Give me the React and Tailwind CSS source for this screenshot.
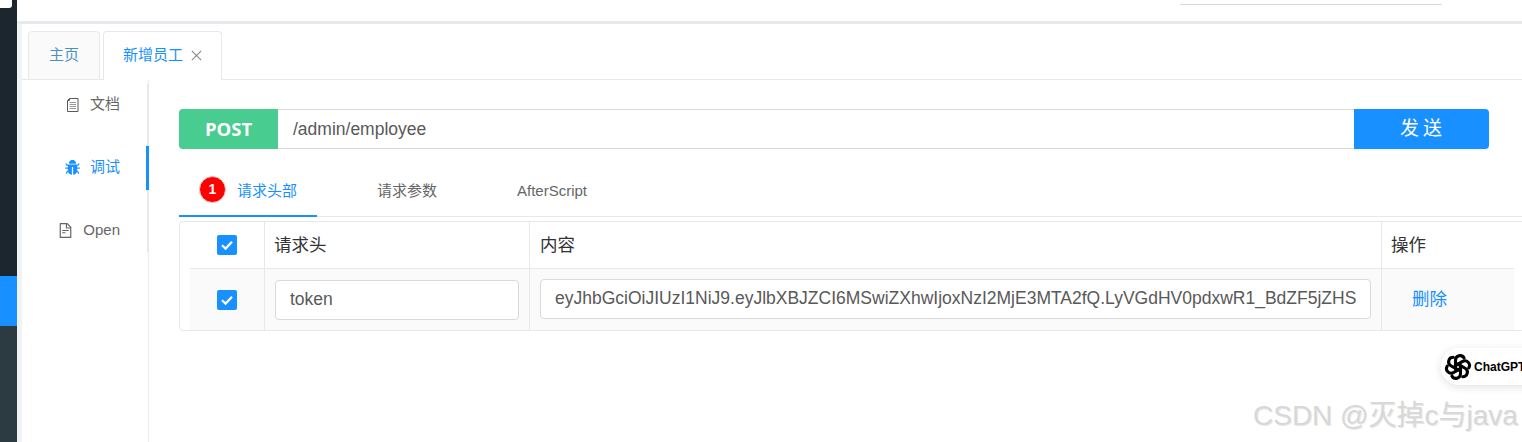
import React from "react";
import { AiFillBug, AiOutlineFileText, AiOutlineClose } from "react-icons/ai";

const FONT = "font-['Liberation_Sans','Noto_Sans_CJK_SC',sans-serif]";

function Check() {
  return (
    <span className="flex h-5 w-5 items-center justify-center rounded-[2px] bg-[#1890ff]">
      <svg viewBox="0 0 20 20" className="h-5 w-5" fill="none" stroke="#fff" strokeWidth="2.2">
        <path d="M5 10.2 L8.6 13.6 L15 6.8" />
      </svg>
    </span>
  );
}

function DocIcon() {
  return (
    <svg viewBox="0 0 14 16" className="h-4 w-[14px]" fill="none" stroke="#595959" strokeWidth="1">
      <path d="M3.5 1.5H12V14.5H1.5V3.5Z" />
      <path d="M3.5 1.5V3.5H1.5" />
      <path d="M3.5 5.5H10M3.5 7.5H10M3.5 9.5H10M3.5 11.5H10" stroke="#999" />
    </svg>
  );
}

function KnotLogo() {
  const angles = [0, 60, 120, 180, 240, 300];
  return (
    <svg viewBox="0 0 28 28" className="h-7 w-7 shrink-0" fill="none" stroke="#000" strokeWidth="3.1" strokeLinecap="round">
      {angles.map((a) => (
        <path key={a} d="M11.5 15.5 V7.2 a4.6 4.6 0 0 1 8.6 -2.2" transform={`rotate(${a} 14 14)`} />
      ))}
    </svg>
  );
}

function SideItem({ icon, label, active, h, gap }) {
  return (
    <div className={`flex items-center justify-end pr-[27px] ${h} ${active ? "text-[#1890ff]" : "text-[#666]"}`}>
      <span className={`flex items-center ${gap}`}>
        {icon}
        <span className="text-[15px]">{label}</span>
      </span>
    </div>
  );
}

export default function App() {
  return (
    <div className={`relative flex h-[442px] w-[1522px] overflow-hidden bg-white ${FONT}`}>
      {/* dark nav strip */}
      <div className="flex w-[17px] shrink-0 flex-col bg-[#1c262f]">
        <div className="mt-[-1px] h-[9px] w-[12px] rounded-br-[3px] bg-white" />
        <div className="h-[268px]" />
        <div className="h-[50px] bg-[#1890ff]" />
        <div className="flex-1 bg-[#2c3a42]" />
      </div>

      <div className="flex min-w-0 flex-1 flex-col bg-[#f0f2f5]">
        {/* header */}
        <div className="flex h-[21px] shrink-0 justify-end bg-white pr-[80px] pt-1">
          <div className="h-px w-[262px] bg-[#d9d9d9]" />
        </div>
        <div className="h-[3px] shrink-0 bg-[#e6e9ee]" />

        <div className="ml-[5px] flex min-h-0 flex-1 flex-col bg-white">
          {/* page tabs */}
          <div className="mt-[7px] flex h-[49px] shrink-0 items-end border-b border-[#e8e8e8] pl-[6px]">
            <div className="mb-[-1px] flex h-[49px] w-[72px] items-center justify-center rounded-t-[4px] border border-[#e8e8e8] bg-[#fafafa] pb-[1px] text-[15px] text-[#4a90c8]">
              主页
            </div>
            <div className="mb-[-1px] ml-[3px] flex h-[49px] w-[119px] items-center justify-center gap-[6px] rounded-t-[4px] border border-b-0 border-[#e8e8e8] bg-white pb-[1px] pl-[2px] text-[15px] text-[#1890ff]">
              <span>新增员工</span>
              <AiOutlineClose className="text-[15px] text-[#8c8c8c]" />
            </div>
          </div>

          <div className="flex min-h-0 flex-1">
            {/* side menu */}
            <div className="flex w-[127px] shrink-0 flex-col border-r border-[#ececec] pt-1">
              <div className="relative mr-[-1px] flex flex-col border-r-2 border-[#e8e8e8]">
                <SideItem h="h-[41px]" gap="gap-[10px]" icon={<DocIcon />} label="文档" />
                <div className="h-[21px]" />
                <div className="relative">
                  <SideItem h="h-[42px]" gap="gap-[9px]" active icon={<AiFillBug className="text-[17px]" />} label="调试" />
                  <div className="absolute right-[-2px] top-0 h-[44px] w-[3px] bg-[#1890ff]" />
                </div>
                <div className="h-[20px]" />
                <SideItem h="h-[44px]" gap="gap-[9px]" icon={<AiOutlineFileText className="text-[17px]" />} label="Open" />
              </div>
            </div>

            {/* content */}
            <div className="min-w-0 flex-1 pl-[30px] pt-[29px]">
              <div className="flex h-10 w-[1310px]">
                <div className="flex w-[99px] items-center justify-center rounded-l-[4px] bg-[#49cc90] font-['Open_Sans',sans-serif] text-[18.5px] font-bold text-white">
                  POST
                </div>
                <div className="flex flex-1 items-center border-y border-[#d9d9d9] pl-[15px] text-[17.5px] text-[#595959]">
                  /admin/employee
                </div>
                <div className="flex w-[135px] items-center justify-center rounded-r-[4px] bg-[#1890ff] pl-[3px] text-[19px] tracking-[4px] text-white shadow-[0_2px_0_rgba(0,0,0,0.035)]">
                  发送
                </div>
              </div>

              {/* inner tabs */}
              <div className="mt-4 flex h-[52px] border-b border-[#e8e8e8] text-[15px] text-[#666]">
                <div className="mb-[-1px] flex w-[138px] items-center border-b-2 border-[#1890ff] pl-[20px] text-[#1890ff]">
                  <span className="mb-[2px] flex h-[27px] w-[27px] items-center justify-center rounded-full border border-[#e0d0d0] bg-[#ff0000] text-sm font-bold text-white">
                    1
                  </span>
                  <span className="ml-[11px] pt-[2px]">请求头部</span>
                </div>
                <div className="ml-[60px] flex items-center pt-[2px]">请求参数</div>
                <div className="ml-[80px] flex items-center pt-[2px]">AfterScript</div>
              </div>

              {/* table */}
              <div className="mt-[4px] w-[1360px] rounded-[4px] border border-[#e8e8e8] text-[17.5px]">
                <div className="grid h-[46px] grid-cols-[85px_265px_852px_132px] items-stretch">
                  <div className="flex items-center justify-center border-r border-[#e8e8e8] pl-[9px]"><Check /></div>
                  <div className="flex items-center border-r border-[#e8e8e8] pl-[9px] text-[#333]">请求头</div>
                  <div className="flex items-center border-r border-[#e8e8e8] pl-[10px] text-[#333]">内容</div>
                  <div className="flex items-center pl-[9px] text-[#333]">操作</div>
                </div>
                <div className="ml-[10px] grid h-[62px] w-[1324px] grid-cols-[75px_265px_852px_132px] items-stretch border-t border-[#e8e8e8] bg-[#fafafa]">
                  <div className="flex items-center justify-center border-r border-[#e8e8e8] pr-[1px]"><Check /></div>
                  <div className="flex items-center border-r border-[#e8e8e8] pl-[10px]">
                    <div className="flex h-10 w-[244px] items-center rounded-[4px] border border-[#d9d9d9] bg-white pl-[14px] text-[#595959]">token</div>
                  </div>
                  <div className="flex items-center border-r border-[#e8e8e8] pb-[2px] pl-[10px]">
                    <div className="flex h-10 w-[831px] items-center overflow-hidden whitespace-nowrap rounded-[4px] border border-[#d9d9d9] bg-white pl-[14px] text-[#595959]">
                      eyJhbGciOiJIUzI1NiJ9.eyJlbXBJZCI6MSwiZXhwIjoxNzI2MjE3MTA2fQ.LyVGdHV0pdxwR1_BdZF5jZHS
                    </div>
                  </div>
                  <div className="flex items-center pl-[30px] text-[#1890ff]">删除</div>
                </div>
              </div>
            </div>
          </div>
        </div>
      </div>

      {/* ChatGPT floating pill */}
      <div className="absolute left-[1441px] top-[348px] flex h-[37px] w-[100px] items-center rounded-l-[18px] bg-white pl-[3px] shadow-[0_2px_8px_rgba(0,0,0,0.12)]">
        <KnotLogo />
        <span className="ml-[2px] text-xs font-bold text-black">ChatGPT</span>
      </div>

      {/* watermark */}
      <div className="absolute left-[1253px] top-[399px] whitespace-nowrap text-[28px] leading-[34px] text-[#d8d8d8] [text-shadow:1px_1px_1px_rgba(0,0,0,0.1)]">
        CSDN @灭掉c与java
      </div>
    </div>
  );
}
